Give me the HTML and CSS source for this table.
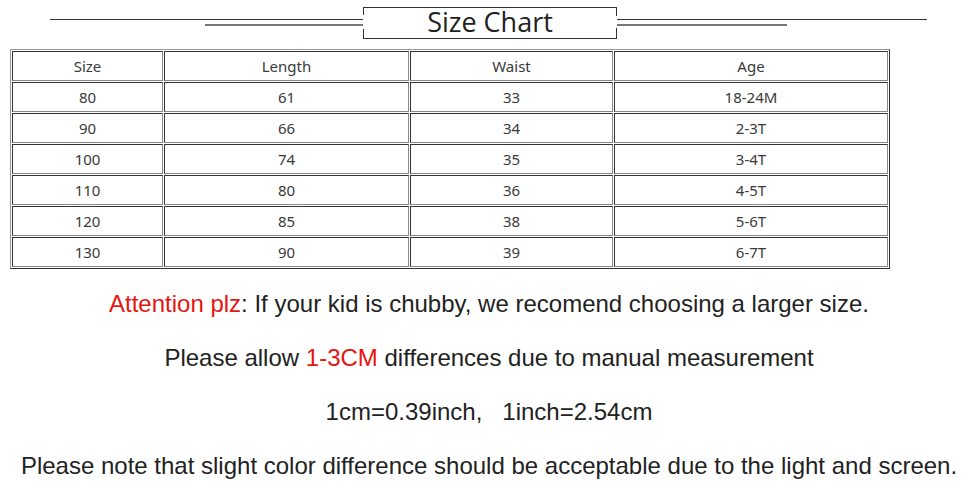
FILE: index.html
```html
<!DOCTYPE html>
<html>
<head>
<meta charset="utf-8">
<title>Size Chart</title>
<link rel="stylesheet" href="styles.css">
</head>
<body>
<div class="page">
  <div class="heading">
    <div class="rules rules-left">
      <div class="rule rule-top"></div>
      <div class="rule rule-low rule-low-left"></div>
    </div>
    <div class="title-box">Size Chart</div>
    <div class="rules rules-right">
      <div class="rule rule-top"></div>
      <div class="rule rule-low rule-low-right"></div>
    </div>
  </div>

  <table class="chart">
    <colgroup>
      <col class="c-size">
      <col class="c-length">
      <col class="c-waist">
      <col class="c-age">
    </colgroup>
    <tr><td>Size</td><td>Length</td><td>Waist</td><td>Age</td></tr>
    <tr><td>80</td><td>61</td><td>33</td><td>18-24M</td></tr>
    <tr><td>90</td><td>66</td><td>34</td><td>2-3T</td></tr>
    <tr><td>100</td><td>74</td><td>35</td><td>3-4T</td></tr>
    <tr><td>110</td><td>80</td><td>36</td><td>4-5T</td></tr>
    <tr><td>120</td><td>85</td><td>38</td><td>5-6T</td></tr>
    <tr><td>130</td><td>90</td><td>39</td><td>6-7T</td></tr>
  </table>

  <div class="notes">
    <p><span class="red">Attention plz</span>: If your kid is chubby, we recomend choosing a larger size.</p>
    <p>Please allow <span class="red">1-3CM</span> differences due to manual measurement</p>
    <p>1cm=0.39inch,&nbsp;&nbsp;&nbsp;1inch=2.54cm</p>
    <p>Please note that slight color difference should be acceptable due to the light and screen.</p>
  </div>
</div>
</body>
</html>
```

FILE: styles.css
```css
html, body {
  margin: 0;
  padding: 0;
  background: #ffffff;
}

.page {
  width: 966px;
  height: 486px;
  overflow: hidden;
}

/* ---------- heading ---------- */
.heading {
  display: flex;
  margin: 7px 0 0 50px;
  height: 32px;
}

.rules {
  display: flex;
  flex-direction: column;
  padding-top: 12px;
  gap: 4px;
}

.rules-left {
  width: 313px;
  align-items: flex-end;
}

.rules-right {
  width: 310px;
  align-items: flex-start;
}

.rule-top {
  width: 100%;
  height: 1px;
  background: #333333;
}

.rule-low {
  height: 2px;
  background: #777777;
}

.rule-low-left {
  width: 158px;
}

.rule-low-right {
  width: 170px;
}

.title-box {
  box-sizing: border-box;
  width: 254px;
  height: 32px;
  border-top: 1px solid #333333;
  border-bottom: 1px solid #333333;
  background:
    linear-gradient(#333333, #333333) left top / 1px 7px no-repeat,
    linear-gradient(#333333, #333333) left bottom / 1px 9px no-repeat,
    linear-gradient(#333333, #333333) right top / 1px 8px no-repeat,
    linear-gradient(#333333, #333333) right bottom / 1px 10px no-repeat;
  font-family: "Open Sans", "Noto Sans", sans-serif;
  font-size: 27px;
  line-height: 27px;
  padding-bottom: 3px;
  color: #222222;
  text-align: center;
}

/* ---------- table ---------- */
.chart {
  margin: 10px 0 0 10px;
  width: 880px;
  table-layout: fixed;
  border-collapse: separate;
  border-spacing: 1px;
  border: 1px solid;
  border-color: #999999 #333333 #333333 #999999;
  font-family: "Noto Sans", "Open Sans", sans-serif;
  font-size: 15px;
  color: #3a3a3a;
}

.c-size { width: 151px; }
.c-length { width: 245px; }
.c-waist { width: 203px; }
.c-age { width: 274px; }

.chart td {
  box-sizing: border-box;
  height: 30px;
  padding: 0;
  line-height: 28px;
  text-align: center;
  border: 1px solid;
  border-color: #333333 #888888 #888888 #333333;
}

/* ---------- notes ---------- */
.notes {
  margin: 8px 0 0 12px;
  width: 954px;
  font-family: "Liberation Sans", Arial, sans-serif;
  font-size: 24px;
  color: #222222;
  text-align: center;
}

.notes p {
  margin: 0;
  line-height: 54px;
  white-space: nowrap;
}

.red {
  color: #e8140f;
}
```
